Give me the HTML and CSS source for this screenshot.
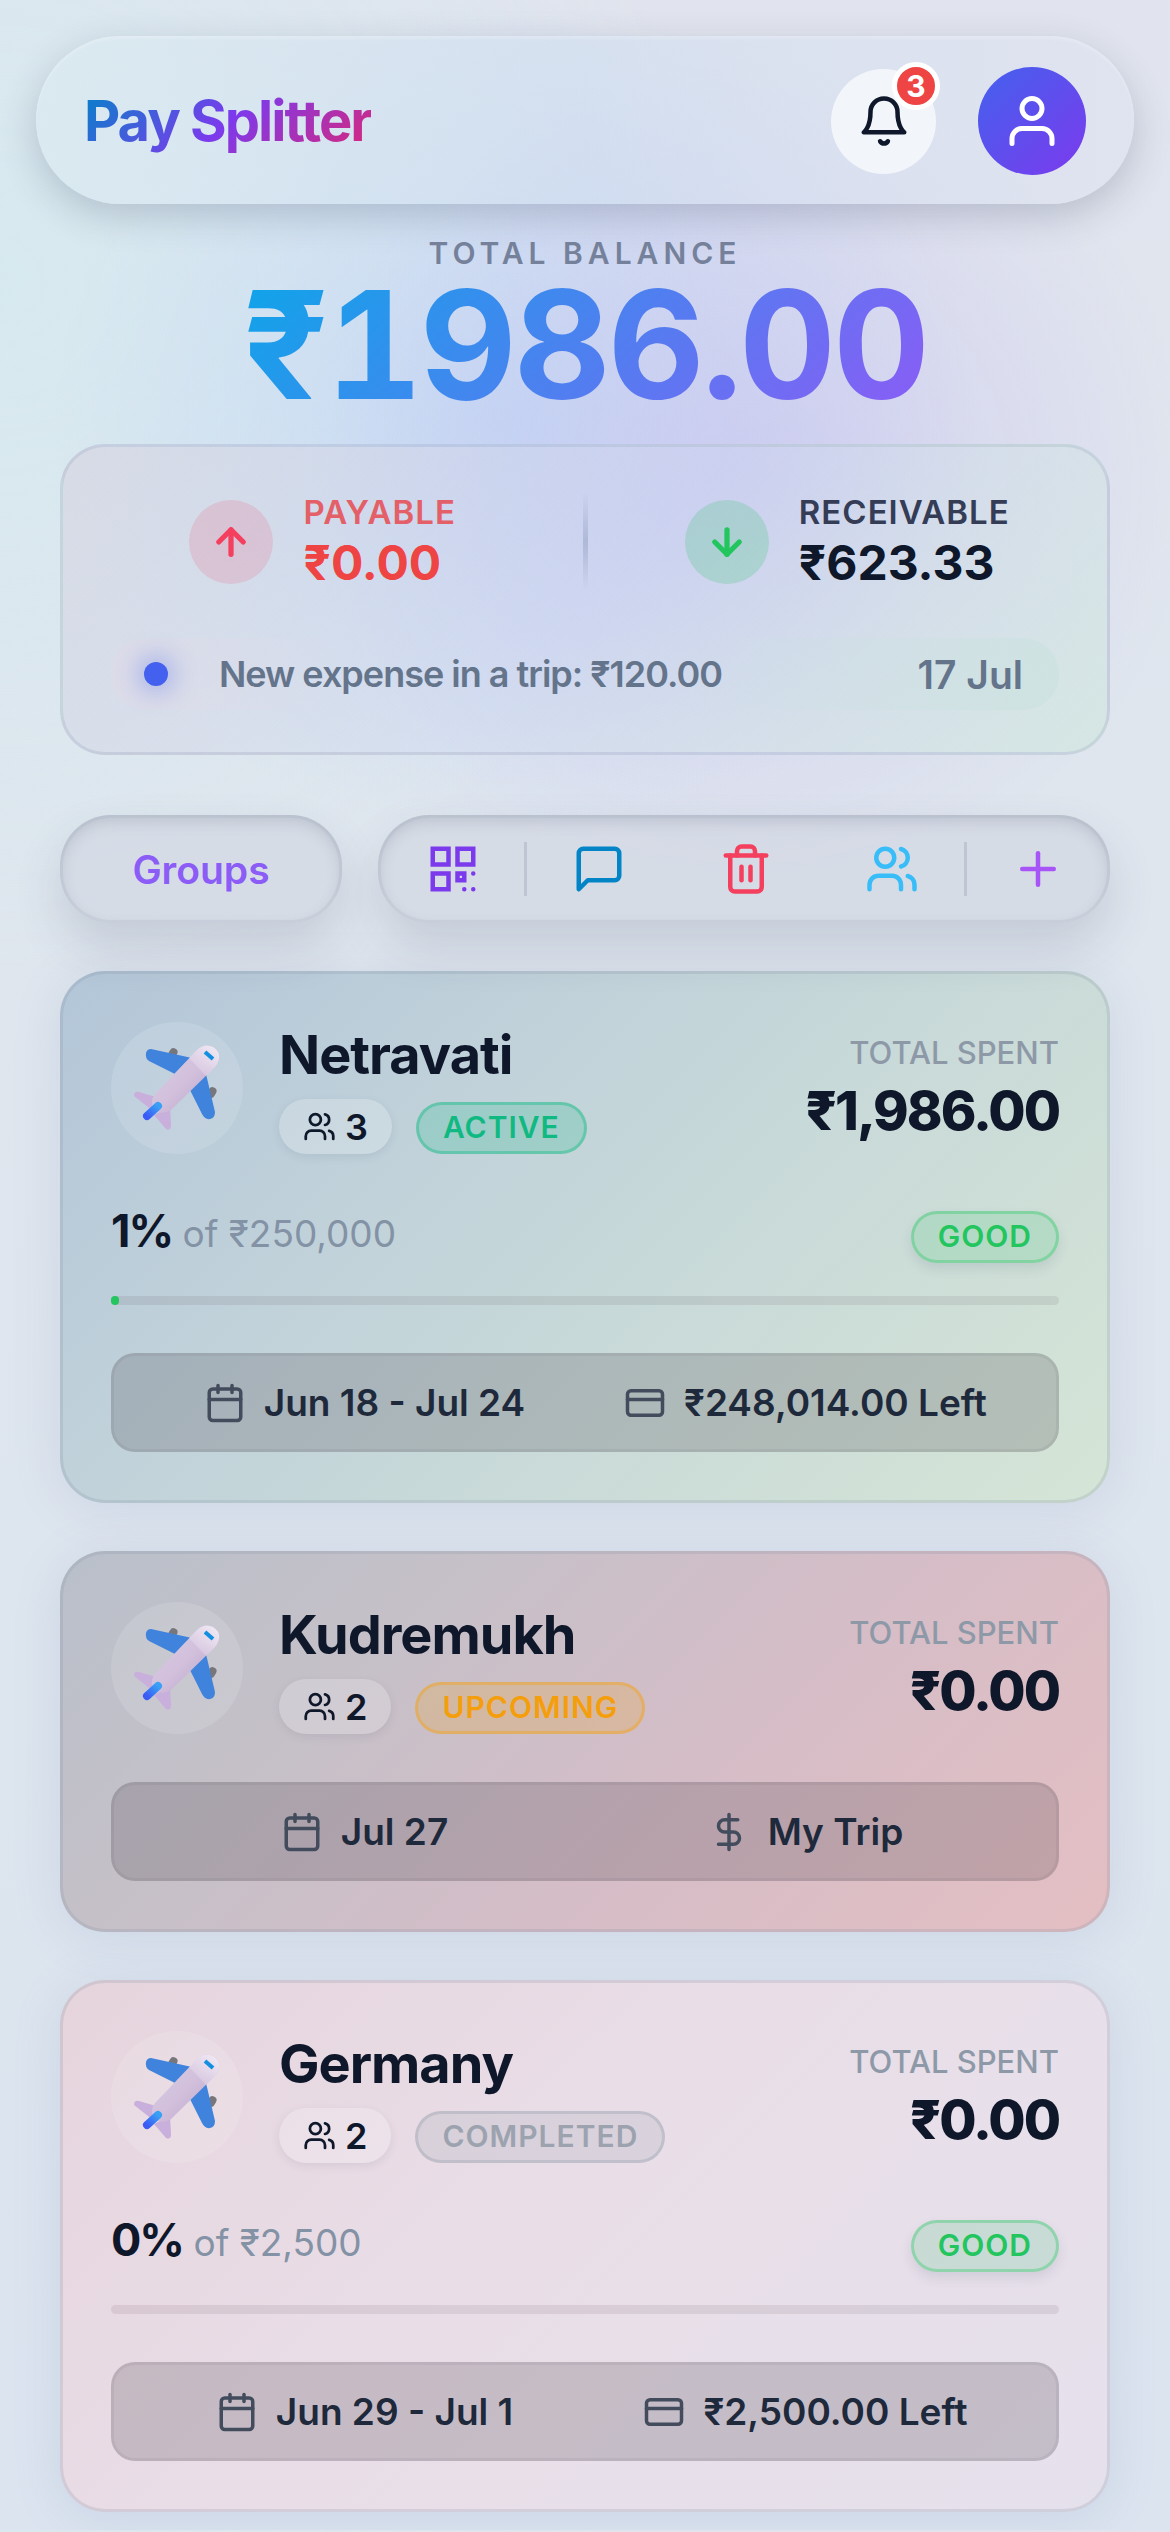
FILE: index.html
```html
<!DOCTYPE html>
<html lang="en">
<head>
<meta charset="utf-8">
<meta name="viewport" content="width=device-width, initial-scale=1">
<title>Pay Splitter</title>
<link rel="stylesheet" href="styles.css">
</head>
<body>
<svg class="defs" aria-hidden="true">
  <defs>
    <linearGradient id="hull" x1="0" y1="0" x2="1" y2="1">
      <stop offset="0" stop-color="#dccfe4"/><stop offset="0.5" stop-color="#d2c0dc"/><stop offset="1" stop-color="#b7a2c9"/>
    </linearGradient>
    <linearGradient id="nose" x1="1" y1="0" x2="0" y2="1">
      <stop offset="0" stop-color="#f3ecf6"/><stop offset="1" stop-color="#f3ecf6" stop-opacity="0"/>
    </linearGradient>
    <linearGradient id="fin" x1="1" y1="0" x2="0" y2="1">
      <stop offset="0" stop-color="#3aa0f5"/><stop offset="1" stop-color="#3a5cf5"/>
    </linearGradient>
    <symbol id="plane" viewBox="0 0 86 86">
      <rect x="35" y="3" width="8" height="11" rx="4" fill="#77777b" transform="rotate(30 39 8)"/>
      <rect x="74" y="42" width="8" height="11" rx="4" fill="#77777b" transform="rotate(30 78 47)"/>
      <path d="M17 4 L58 13 L41 29 L15 16 Q11 13 12 8 Q13 4 17 4Z" fill="#3f83dc"/>
      <path d="M72 29 L81 67 Q81 73 76 74 Q71 75 68 69 L56 45Z" fill="#3f83dc"/>
      <path d="M22 52 L5 47 Q0 46 0 51 L19 66Z" fill="#c9afdb"/>
      <path d="M36 62 L37 80 Q37 86 32 84 L20 70Z" fill="#c9afdb"/>
      <path d="M21 49 L64 4 Q71 -2 79 2 Q88 8 84 17 Q83 20 81 22 L37 65 Q27 71 20 64 Q15 57 21 49Z" fill="url(#hull)"/>
      <path d="M55 13 L64 4 Q71 -2 79 2 Q88 8 84 17 Q83 20 81 22 L72 31Z" fill="url(#nose)"/>
      <path d="M71 7 L79 14" stroke="#128fe0" stroke-width="4"/>
      <path d="M24 61 L13 71" stroke="url(#fin)" stroke-width="8" stroke-linecap="round"/>
    </symbol>
    <symbol id="users" viewBox="0 0 24 24">
      <path d="M16 21v-2a4 4 0 0 0-4-4H6a4 4 0 0 0-4 4v2"/><circle cx="9" cy="7" r="4"/>
      <path d="M22 21v-2a4 4 0 0 0-3-3.87"/><path d="M16 3.13a4 4 0 0 1 0 7.75"/>
    </symbol>
    <symbol id="calendar" viewBox="0 0 24 24">
      <path d="M8 2v4"/><path d="M16 2v4"/><rect x="3" y="4" width="18" height="18" rx="2"/><path d="M3 10h18"/>
    </symbol>
    <symbol id="card" viewBox="0 0 24 24">
      <rect x="2" y="5" width="20" height="14" rx="2"/><path d="M2 10h20"/>
    </symbol>
    <symbol id="dollar" viewBox="0 0 24 24">
      <path d="M12 2v20"/><path d="M17 5H9.5a3.5 3.5 0 0 0 0 7h5a3.5 3.5 0 0 1 0 7H6"/>
    </symbol>
  </defs>
</svg>

<header class="topbar">
  <h1 class="logo">Pay Splitter</h1>
  <div class="topbar-actions">
    <button class="bell" aria-label="Notifications">
      <svg class="icon icon-md" viewBox="0 0 24 24"><path d="M18 8A6 6 0 0 0 6 8c0 7-3 9-3 9h18s-3-2-3-9"/><path d="M13.73 21a2 2 0 0 1-3.46 0"/></svg>
      <span class="bell-count">3</span>
    </button>
    <button class="profile" aria-label="Profile">
      <svg class="icon icon-lg" viewBox="0 0 24 24"><path d="M20 21v-2a4 4 0 0 0-4-4H8a4 4 0 0 0-4 4v2"/><circle cx="12" cy="7" r="4"/></svg>
    </button>
  </div>
</header>

<main class="content">
  <section class="balance">
    <p class="balance-label">TOTAL BALANCE</p>
    <p class="balance-total">₹1986.00</p>
    <div class="summary">
      <div class="flows">
        <div class="flow flow-out">
          <span class="flow-badge"><svg class="icon icon-sm" viewBox="0 0 24 24"><path d="M12 19V5"/><path d="m5 12 7-7 7 7"/></svg></span>
          <div class="flow-text"><span class="flow-label">PAYABLE</span><span class="flow-amount">₹0.00</span></div>
        </div>
        <div class="flow-divider"></div>
        <div class="flow flow-in">
          <span class="flow-badge"><svg class="icon icon-sm" viewBox="0 0 24 24"><path d="M12 5v14"/><path d="m19 12-7 7-7-7"/></svg></span>
          <div class="flow-text"><span class="flow-label">RECEIVABLE</span><span class="flow-amount">₹623.33</span></div>
        </div>
      </div>
      <div class="notice">
        <span class="notice-dot"></span>
        <span class="notice-text">New expense in a trip: ₹120.00</span>
        <time class="notice-date">17 Jul</time>
      </div>
    </div>
  </section>

  <nav class="tools">
    <button class="groups">Groups</button>
    <div class="toolbar">
      <button class="tool tool-qr" aria-label="QR code">
        <svg class="icon icon-md icon-square" viewBox="0 0 24 24"><path d="M3 3h7v7H3z"/><path d="M14 3h7v7h-7z"/><path d="M3 14h7v7H3z"/><path d="M14 14h3v3h-3z"/><path d="M21 14v.01M17 21h.01M21 21h.01"/></svg>
      </button>
      <button class="tool tool-chat" aria-label="Messages">
        <svg class="icon icon-md" viewBox="0 0 24 24"><path d="M21 15a2 2 0 0 1-2 2H7l-4 4V5a2 2 0 0 1 2-2h14a2 2 0 0 1 2 2z"/></svg>
      </button>
      <button class="tool tool-trash" aria-label="Delete">
        <svg class="icon icon-md" viewBox="0 0 24 24"><path d="M3 6h18"/><path d="M19 6v14a2 2 0 0 1-2 2H7a2 2 0 0 1-2-2V6"/><path d="M8 6V4a2 2 0 0 1 2-2h4a2 2 0 0 1 2 2v2"/><path d="M10 11v6"/><path d="M14 11v6"/></svg>
      </button>
      <button class="tool tool-people" aria-label="Members">
        <svg class="icon icon-md"><use href="#users"/></svg>
      </button>
      <button class="tool tool-add" aria-label="Add">
        <svg class="icon icon-md" viewBox="0 0 24 24"><path d="M5 12h14"/><path d="M12 5v14"/></svg>
      </button>
    </div>
  </nav>

  <article class="trip trip-green">
    <div class="trip-head">
      <span class="trip-avatar"><svg class="plane"><use href="#plane"/></svg></span>
      <div class="trip-info">
        <h2 class="trip-name">Netravati</h2>
        <div class="trip-tags"><span class="members"><svg class="icon icon-xs"><use href="#users"/></svg>3</span><span class="tag tag-active">ACTIVE</span></div>
      </div>
      <div class="spent"><span class="spent-label">TOTAL SPENT</span><span class="spent-amount">₹1,986.00</span></div>
    </div>
    <div class="budget">
      <div class="budget-row">
        <p class="budget-text"><strong class="budget-percent">1%</strong> of ₹250,000</p>
        <span class="tag tag-good">GOOD</span>
      </div>
      <div class="bar"><div class="bar-fill" style="width:0.794%"></div></div>
    </div>
    <div class="details">
      <span class="detail"><svg class="icon icon-sm"><use href="#calendar"/></svg>Jun 18 - Jul 24</span>
      <span class="detail"><svg class="icon icon-sm"><use href="#card"/></svg>₹248,014.00 Left</span>
    </div>
  </article>

  <article class="trip trip-red">
    <div class="trip-head">
      <span class="trip-avatar"><svg class="plane"><use href="#plane"/></svg></span>
      <div class="trip-info">
        <h2 class="trip-name">Kudremukh</h2>
        <div class="trip-tags"><span class="members"><svg class="icon icon-xs"><use href="#users"/></svg>2</span><span class="tag tag-upcoming">UPCOMING</span></div>
      </div>
      <div class="spent"><span class="spent-label">TOTAL SPENT</span><span class="spent-amount">₹0.00</span></div>
    </div>
    <div class="details">
      <span class="detail"><svg class="icon icon-sm"><use href="#calendar"/></svg>Jul 27</span>
      <span class="detail"><svg class="icon icon-sm"><use href="#dollar"/></svg>My Trip</span>
    </div>
  </article>

  <article class="trip trip-pink">
    <div class="trip-head">
      <span class="trip-avatar"><svg class="plane"><use href="#plane"/></svg></span>
      <div class="trip-info">
        <h2 class="trip-name">Germany</h2>
        <div class="trip-tags"><span class="members"><svg class="icon icon-xs"><use href="#users"/></svg>2</span><span class="tag tag-completed">COMPLETED</span></div>
      </div>
      <div class="spent"><span class="spent-label">TOTAL SPENT</span><span class="spent-amount">₹0.00</span></div>
    </div>
    <div class="budget">
      <div class="budget-row">
        <p class="budget-text"><strong class="budget-percent">0%</strong> of ₹2,500</p>
        <span class="tag tag-good">GOOD</span>
      </div>
      <div class="bar"></div>
    </div>
    <div class="details">
      <span class="detail"><svg class="icon icon-sm"><use href="#calendar"/></svg>Jun 29 - Jul 1</span>
      <span class="detail"><svg class="icon icon-sm"><use href="#card"/></svg>₹2,500.00 Left</span>
    </div>
  </article>
</main>
</body>
</html>
```

FILE: styles.css
```css
*, *::before, *::after { box-sizing: border-box; }

body {
  margin: 0;
  padding: 36px 0 18px;
  font-family: Inter, "Liberation Sans", sans-serif;
  color: #0f172a;
  background:
    radial-gradient(ellipse 440px 420px at 64% 480px, rgba(196, 186, 240, 0.5), transparent),
    radial-gradient(ellipse 460px 420px at 44% 420px, rgba(180, 208, 248, 0.6), transparent),
    radial-gradient(ellipse 700px 700px at 0 280px, rgba(214, 234, 240, 0.9), transparent),
    linear-gradient(180deg, #e1e4ee 0, #dfe6ee 900px, #dbe4ef 100%);
}

h1, h2, p { margin: 0; }

button {
  margin: 0;
  padding: 0;
  border: 0;
  background: none;
  font: inherit;
  color: inherit;
  cursor: pointer;
}

.defs { position: absolute; width: 0; height: 0; }

.icon {
  flex: none;
  fill: none;
  stroke: currentColor;
  stroke-width: 2;
  stroke-linecap: round;
  stroke-linejoin: round;
}
.icon-xs { width: 33px; height: 33px; }
.icon-sm { width: 42px; height: 42px; }
.icon-md { width: 54px; height: 54px; }
.icon-lg { width: 60px; height: 60px; }
.icon-square { stroke-linejoin: miter; }

/* Header */
.topbar {
  display: flex;
  align-items: center;
  justify-content: space-between;
  margin: 0 36px;
  height: 168px;
  padding: 2px 48px 0;
  border-radius: 84px;
  background: linear-gradient(90deg, rgba(219, 234, 241, 0.7), rgba(208, 222, 240, 0.6) 50%, rgba(224, 227, 240, 0.8));
  box-shadow: 0 12px 36px rgba(60, 70, 100, 0.24), inset 0 3px 3px rgba(255, 255, 255, 0.2);
}
.logo {
  font-size: 56px;
  line-height: 72px;
  font-weight: 700;
  letter-spacing: -2px;
  color: transparent;
  background: linear-gradient(135deg, #0284c7, #7c3aed 50%, #db2777);
  background-clip: text;
  -webkit-background-clip: text;
}
.topbar-actions { display: flex; align-items: center; gap: 42px; }
.bell, .profile {
  position: relative;
  display: flex;
  align-items: center;
  justify-content: center;
  border-radius: 50%;
}
.bell {
  width: 105px;
  height: 105px;
  background: rgba(248, 250, 252, 0.8);
}
.bell-count {
  position: absolute;
  top: -7px;
  right: -4px;
  width: 48px;
  height: 48px;
  border: 5px solid #fff;
  border-radius: 50%;
  background: #ef4444;
  color: #fff;
  font-size: 30px;
  line-height: 38px;
  font-weight: 700;
  text-align: center;
}
.profile {
  width: 108px;
  height: 108px;
  color: #fff;
  background: linear-gradient(135deg, #4361ee, #7c3aed);
}

/* Balance */
.content { padding: 0 60px; }
.balance { padding-top: 30px; }
.balance-label {
  font-size: 30px;
  line-height: 39px;
  font-weight: 600;
  letter-spacing: 5px;
  text-align: center;
  color: #75819a;
}
.balance-total {
  width: fit-content;
  margin: 0 auto;
  font-size: 150px;
  line-height: 144px;
  font-weight: 700;
  font-variant-numeric: tabular-nums;
  letter-spacing: -3px;
  color: transparent;
  background: linear-gradient(135deg, #0ea5e9, #8b5cf6);
  background-clip: text;
  -webkit-background-clip: text;
}
.summary {
  margin-top: 27px;
  padding: 45px 48px 42px;
  border: 3px solid rgba(130, 145, 175, 0.2);
  border-radius: 45px;
  background: linear-gradient(135deg, rgba(214, 214, 226, 0.75), rgba(205, 215, 240, 0.3) 50%, rgba(210, 230, 224, 0.75));
}
.flows { display: grid; grid-template-columns: 1fr 5px 1fr; gap: 48px; }
.flow { display: flex; align-items: center; justify-content: center; gap: 30px; height: 99px; }
.flow-badge {
  display: flex;
  align-items: center;
  justify-content: center;
  width: 84px;
  height: 84px;
  border-radius: 50%;
}
.flow-badge .icon { stroke-width: 3; }
.flow-out .flow-badge { background: rgba(244, 63, 94, 0.15); color: #f43f5e; }
.flow-in .flow-badge { background: rgba(34, 197, 94, 0.2); color: #22c55e; }
.flow-text { display: flex; flex-direction: column; }
.flow-label { font-size: 33px; line-height: 42px; font-weight: 600; letter-spacing: 1px; color: #343c56; }
.flow-amount { font-size: 48px; line-height: 60px; font-weight: 700; }
.flow-out .flow-label { color: #e46068; }
.flow-out .flow-amount { color: #ef4444; }
.flow-divider { background: linear-gradient(transparent, rgba(120, 135, 170, 0.35), transparent); }
.notice {
  display: flex;
  align-items: center;
  height: 72px;
  margin-top: 47px;
  padding: 0 36px 0 33px;
  border-radius: 36px;
  background: linear-gradient(90deg, rgba(225, 218, 232, 0.5), transparent 25%, transparent 60%, rgba(200, 225, 222, 0.5));
}
.notice-dot {
  width: 24px;
  height: 24px;
  border-radius: 50%;
  background: #4361ee;
  box-shadow: 0 0 24px 6px rgba(67, 97, 238, 0.35);
}
.notice-text { margin-left: 51px; font-size: 36px; font-weight: 600; letter-spacing: -1px; color: #64748b; }
.notice-date { margin-left: auto; font-size: 39px; font-weight: 600; color: #64748b; }

/* Tools */
.tools { display: flex; gap: 36px; margin: 60px 0 48px; }
.groups, .toolbar {
  height: 108px;
  border-radius: 51px;
  background: rgba(208, 214, 225, 0.6);
  box-shadow:
    0 24px 48px rgba(60, 70, 100, 0.16),
    inset 0 0 0 3px rgba(150, 160, 180, 0.15),
    inset 0 6px 15px rgba(80, 90, 110, 0.2);
}
.groups {
  width: 282px;
  font-size: 39px;
  font-weight: 600;
  color: #8b5cf6;
}
.toolbar { flex: 1; display: flex; align-items: center; }
.tool {
  flex: 1;
  display: flex;
  align-items: center;
  justify-content: center;
  height: 54px;
  border-left: 3px solid transparent;
}
.tool-chat, .tool-add { border-left-color: rgba(140, 150, 170, 0.3); }
.tool-qr { color: #7c3aed; }
.tool-chat { color: #0284c7; }
.tool-trash { color: #f43f5e; }
.tool-people { color: #38bdf8; }
.tool-add { color: #a855f7; }

/* Trip cards */
.trip {
  display: flex;
  flex-direction: column;
  gap: 48px;
  padding: 48px;
  border: 3px solid rgba(130, 145, 165, 0.22);
  border-radius: 45px;
  background-origin: border-box;
  box-shadow: 0 6px 48px rgba(120, 130, 180, 0.16);
}
.trip + .trip { margin-top: 48px; }
.trip-green { background-image: linear-gradient(135deg, #b3c6d8, #c1d2da 35%, #c9dad9 60%, #d5e5d6); }
.trip-red { background-image: linear-gradient(135deg, #b9c0ca, #c6c0c8 30%, #d5bdc7 60%, #e4bfc3); }
.trip-pink { background-image: linear-gradient(135deg, #e6d4dc, #e9dee8 45%, #e5e1ec); }
.trip-head { display: flex; align-items: flex-start; }
.trip-avatar {
  display: flex;
  align-items: center;
  justify-content: center;
  width: 132px;
  height: 132px;
  border-radius: 50%;
  background: rgba(255, 255, 255, 0.13);
}
.plane { width: 86px; height: 86px; }
.trip-info { margin-left: 36px; }
.trip-name { font-size: 54px; line-height: 66px; font-weight: 700; letter-spacing: -1px; }
.trip-tags { display: flex; align-items: flex-end; gap: 24px; margin-top: 11px; }
.members {
  display: flex;
  align-items: center;
  gap: 9px;
  height: 55px;
  padding: 0 24px;
  border-radius: 28px;
  background: rgba(255, 255, 255, 0.2);
  box-shadow: 0 3px 9px rgba(60, 70, 100, 0.1);
  font-size: 36px;
  font-weight: 600;
}
.tag {
  height: 52px;
  padding: 0 24px;
  border: 3px solid;
  border-radius: 26px;
  font-size: 30px;
  line-height: 44px;
  font-weight: 600;
  letter-spacing: 1px;
}
.tag-active { color: #10b981; background: rgba(16, 185, 129, 0.2); border-color: rgba(16, 185, 129, 0.4); }
.tag-upcoming { color: #f59e0b; background: rgba(245, 158, 11, 0.2); border-color: rgba(245, 158, 11, 0.4); }
.tag-completed { color: #9ca3af; background: rgba(156, 163, 175, 0.2); border-color: rgba(156, 163, 175, 0.4); }
.tag-good {
  color: #22c55e;
  background: rgba(34, 197, 94, 0.15);
  border-color: rgba(34, 197, 94, 0.35);
  box-shadow: 0 6px 12px rgba(60, 70, 100, 0.12);
}
.spent { display: flex; flex-direction: column; align-items: flex-end; gap: 6px; margin: 11px 0 0 auto; }
.spent-label { font-size: 31px; line-height: 39px; font-weight: 500; color: #8e99a8; }
.spent-amount { font-size: 54px; line-height: 66px; font-weight: 800; letter-spacing: -2px; }
.budget { padding-top: 9px; }
.budget-row { display: flex; align-items: flex-start; justify-content: space-between; height: 52px; }
.budget-text { font-size: 37px; line-height: 40px; color: #8392a5; }
.budget-percent { font-size: 45px; font-weight: 700; letter-spacing: -2px; color: #0f172a; }
.bar { height: 9px; margin-top: 33px; border-radius: 5px; background: rgba(80, 60, 70, 0.1); }
.bar-fill { height: 100%; border-radius: 5px; background: #22c55e; }
.details {
  display: grid;
  grid-template-columns: 1fr 1fr;
  height: 99px;
  padding: 0 30px;
  border: 3px solid rgba(60, 60, 80, 0.08);
  border-radius: 24px;
  background: rgba(62, 52, 62, 0.2);
}
.detail {
  display: flex;
  align-items: center;
  justify-content: center;
  gap: 18px;
  font-size: 37px;
  font-weight: 600;
  white-space: nowrap;
  color: #1e293b;
}
.detail .icon { color: #424c5c; }
```
